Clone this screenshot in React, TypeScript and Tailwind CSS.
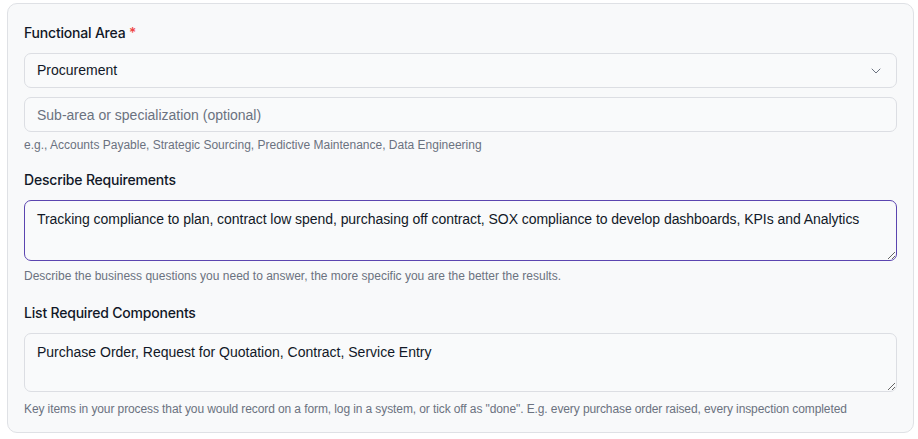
import { ChevronDown } from "lucide-react";

export default function App() {
  return (
    <div
      className="w-[918px] h-[439px] bg-white pl-[7px] pr-[4px] pt-[3px]"
      style={{ fontFamily: "'Liberation Sans', Arial, sans-serif" }}
    >
      <div className="rounded-[10px] border border-[#dfe1e5] bg-[#f8f9fa] px-4 pt-[19px] pb-[15px]">
        {/* Functional area */}
        <div className="flex flex-col">
          <label className="font-['Inter'] tracking-[-0.2px] text-[14px] leading-5 font-medium text-[#111827] mb-[10px]">
            Functional Area <span className="text-[#ef4444]">*</span>
          </label>
          <div className="flex items-center justify-between h-[35px] rounded-[7px] border border-[#dcdee3] bg-[#f9fafb] px-3">
            <span className="text-[14px] text-[#111827]">Procurement</span>
            <ChevronDown className="w-4 h-4 text-[#6b7280]" strokeWidth={1.5} />
          </div>
          <input
            className="mt-[9px] h-[35px] rounded-[7px] border border-[#dcdee3] bg-[#f9fafb] px-3 text-[14px] placeholder:text-[#6b7280] outline-none"
            placeholder="Sub-area or specialization (optional)"
          />
          <p className="mt-[5px] text-[12px] leading-4 text-[#6b7280]">
            e.g., Accounts Payable, Strategic Sourcing, Predictive Maintenance, Data Engineering
          </p>
        </div>

        {/* Describe requirements */}
        <div className="flex flex-col mt-[17px]">
          <label className="font-['Inter'] tracking-[-0.2px] text-[14px] leading-5 font-medium text-[#111827] mb-[10px]">
            Describe Requirements
          </label>
          <textarea
            className="h-[61px] rounded-[7px] border border-[#5b45b0] bg-[#f9fafb] px-3 py-[8px] text-[14px] leading-5 tracking-[-0.05px] text-[#111827] outline-none resize-y"
            defaultValue="Tracking compliance to plan, contract low spend, purchasing off contract, SOX compliance to develop dashboards, KPIs and Analytics"
          />
          <p className="mt-[7px] text-[12px] leading-4 text-[#6b7280]">
            Describe the business questions you need to answer, the more specific you are the better the results.
          </p>
        </div>

        {/* Components */}
        <div className="flex flex-col mt-[19px]">
          <label className="font-['Inter'] tracking-[-0.2px] text-[14px] leading-5 font-medium text-[#111827] mb-[10px]">
            List Required Components
          </label>
          <textarea
            className="h-[59px] rounded-[7px] border border-[#dcdee3] bg-[#f9fafb] px-3 py-[8px] text-[14px] leading-5 text-[#111827] outline-none resize-y"
            defaultValue="Purchase Order, Request for Quotation, Contract, Service Entry"
          />
          <p className="mt-[9px] text-[12px] leading-4 tracking-[-0.1px] text-[#6b7280]">
            Key items in your process that you would record on a form, log in a system, or tick off as "done". E.g. every purchase order raised, every inspection completed
          </p>
        </div>
      </div>
    </div>
  );
}
